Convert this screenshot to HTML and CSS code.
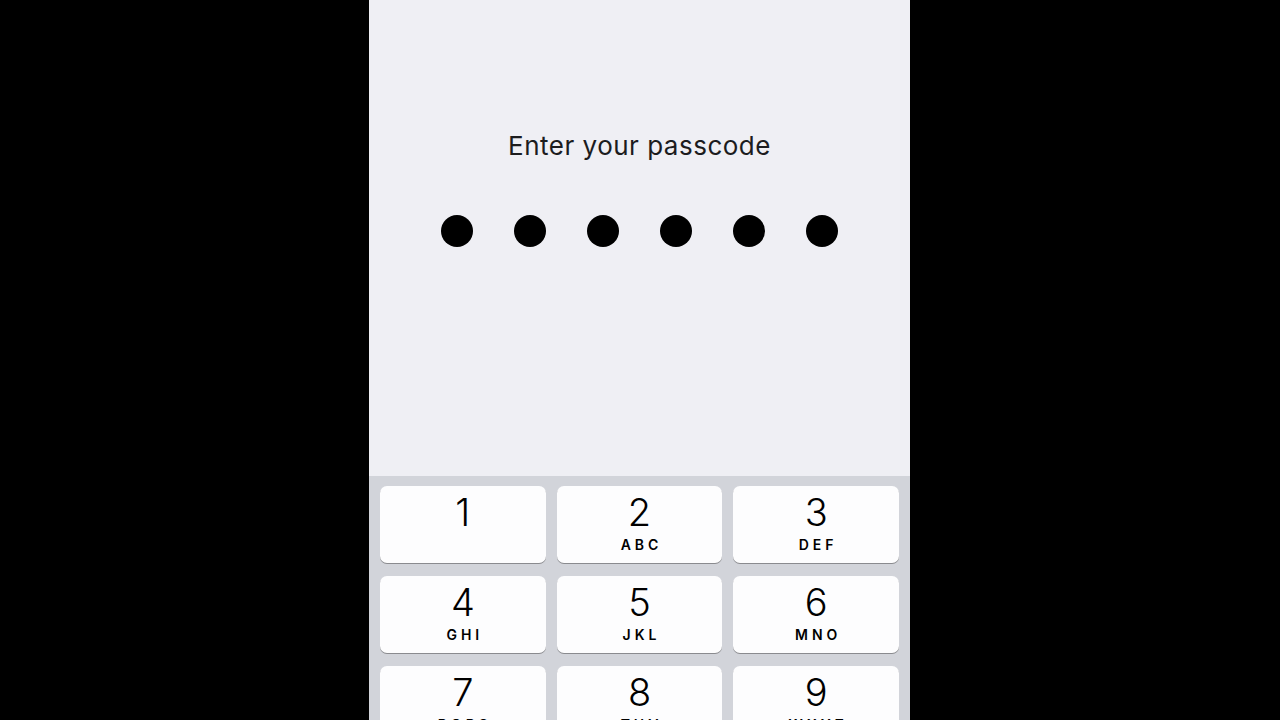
FILE: index.html
```html
<!DOCTYPE html>
<html lang="en">
<head>
  <meta charset="UTF-8" />
  <title>Passcode</title>
  <link rel="stylesheet" href="styles.css">
</head>
<body>
  <div class="screen">
    <div class="top">
      <p class="title">Enter your passcode</p>
      <div class="dots">
        <span class="dot"></span>
        <span class="dot"></span>
        <span class="dot"></span>
        <span class="dot"></span>
        <span class="dot"></span>
        <span class="dot"></span>
      </div>
    </div>

    <div class="keypad">
      <div class="key"><span class="num">1</span><span class="letters"></span></div>
      <div class="key"><span class="num">2</span><span class="letters">ABC</span></div>
      <div class="key"><span class="num">3</span><span class="letters">DEF</span></div>
      <div class="key"><span class="num">4</span><span class="letters">GHI</span></div>
      <div class="key"><span class="num">5</span><span class="letters">JKL</span></div>
      <div class="key"><span class="num">6</span><span class="letters">MNO</span></div>
      <div class="key"><span class="num">7</span><span class="letters">PQRS</span></div>
      <div class="key"><span class="num">8</span><span class="letters">TUV</span></div>
      <div class="key"><span class="num">9</span><span class="letters">WXYZ</span></div>
      <div class="key blank"></div>
      <div class="key"><span class="num">0</span><span class="letters"></span></div>
      <div class="key blank"></div>
    </div>
  </div>
</body>
</html>
```

FILE: styles.css
```css
html, body {
  margin: 0;
  height: 720px;
  overflow: hidden;
}
body {
  background: #000;
  display: flex;
  justify-content: center;
  padding-right: 1px;
  font-family: Inter, "Liberation Sans", Arial, sans-serif;
}
.screen {
  width: 541px;
  height: 720px;
  background: #efeff4;
  display: flex;
  flex-direction: column;
  overflow: hidden;
}
.top {
  height: 476px;
  padding-top: 131px;
  box-sizing: border-box;
  flex-shrink: 0;
}
.title {
  margin: 0;
  text-align: center;
  font-size: 26px;
  line-height: 30px;
  letter-spacing: 0.5px;
  color: #1c1c1e;
}
.dots {
  display: flex;
  justify-content: center;
  gap: 41px;
  margin-top: 54px;
}
.dot {
  width: 32px;
  height: 32px;
  border-radius: 50%;
  background: #000;
}
.keypad {
  flex: 1;
  background: #d2d4da;
  padding: 10px 11px;
  display: grid;
  grid-template-columns: repeat(3, 1fr);
  grid-auto-rows: 77px;
  column-gap: 11px;
  row-gap: 13px;
}
.key {
  background: #fdfdfe;
  border-radius: 7px;
  box-shadow: 0 1px 0 #8a8b8f;
  display: flex;
  flex-direction: column;
  align-items: center;
  padding-top: 7px;
  box-sizing: border-box;
  color: #000;
}
.key.blank {
  background: transparent;
  box-shadow: none;
}
.num {
  font-size: 38px;
  line-height: 38px;
  font-weight: 300;
}
.letters {
  margin-top: 7px;
  font-size: 14px;
  line-height: 14px;
  font-weight: 600;
  letter-spacing: 4px;
  margin-right: -4px;
  height: 14px;
}
```
